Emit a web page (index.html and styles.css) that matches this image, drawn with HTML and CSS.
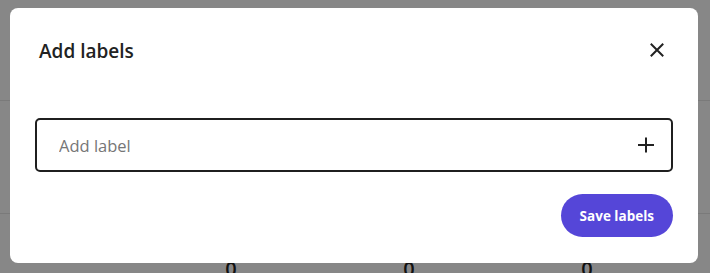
FILE: index.html
```html
<!DOCTYPE html>
<html lang="en">
  <head>
    <meta charset="utf-8">
    <meta name="viewport" content="width=device-width, initial-scale=1">
    <title>Add labels</title>
    <link rel="stylesheet" href="styles.css">
  </head>
  <body>
    <div class="page">
      <div class="page-top"></div>
      <div class="page-row"></div>
      <div class="stats">
        <span class="stat">0</span>
        <span class="stat">0</span>
        <span class="stat">0</span>
      </div>
    </div>

    <div class="backdrop">
      <div class="modal" role="dialog" aria-labelledby="modal-title">
        <div class="modal-header">
          <h2 class="modal-title" id="modal-title">Add labels</h2>
          <button class="icon-btn close-btn" aria-label="Close">
            <svg width="24" height="24" viewBox="0 0 24 24" fill="none" stroke="#222" stroke-width="2" stroke-linecap="square">
              <path d="M6.5 6.5l11 11M17.5 6.5l-11 11"/>
            </svg>
          </button>
        </div>
        <div class="label-field">
          <input class="label-input" type="text" placeholder="Add label" autofocus>
          <button class="icon-btn add-btn" aria-label="Add label">
            <svg width="24" height="24" viewBox="0 0 24 24" fill="none" stroke="#222" stroke-width="2">
              <path d="M12 4.5v15M4 12h16"/>
            </svg>
          </button>
        </div>
        <div class="modal-footer">
          <button class="save-btn">Save labels</button>
        </div>
      </div>
    </div>
  </body>
</html>
```

FILE: styles.css
```css
html, body {
  margin: 0;
  height: 100%;
}

* {
  box-sizing: border-box;
}

body {
  font-family: "Open Sans", "Noto Sans", sans-serif;
  background: #fff;
  overflow: hidden;
}

/* page under the dialog */
.page-top {
  height: 101px;
  border-bottom: 1px solid #e6e6e6;
}

.page-row {
  height: 113px;
  border-bottom: 1px solid #e6e6e6;
}

.stats {
  display: flex;
  padding: 41px 0 0 142px;
}

.stat {
  width: 178px;
  text-align: center;
  font-size: 20px;
  font-weight: 600;
  line-height: 28px;
  color: #222;
}

/* dialog */
.backdrop {
  position: fixed;
  inset: 0;
  background: rgba(0, 0, 0, 0.47);
}

.modal {
  position: absolute;
  top: 8px;
  left: 10px;
  width: 688px;
  height: 255px;
  padding: 28px 25px 25px;
  background: #fff;
  border-radius: 8px;
}

.modal-header {
  display: flex;
  align-items: center;
  justify-content: space-between;
  height: 30px;
}

.modal-title {
  margin: 0;
  padding-left: 4px;
  font-size: 19px;
  font-weight: 600;
  line-height: 24px;
  color: #222;
}

.icon-btn {
  display: flex;
  align-items: center;
  justify-content: center;
  padding: 0;
  border: 0;
  background: none;
  cursor: pointer;
}

.close-btn {
  width: 30px;
  height: 30px;
  margin: 0 1px 3px 0;
}

.label-field {
  display: flex;
  align-items: center;
  height: 54px;
  margin-top: 52px;
  padding: 0 13px 0 22px;
  border: 2px solid #1f1f1f;
  border-radius: 5px;
}

.label-input {
  flex: 1;
  min-width: 0;
  height: 100%;
  padding: 0;
  border: 0;
  outline: none;
  font-family: inherit;
  font-size: 16.5px;
  color: #222;
  caret-color: #222;
}

.label-input::placeholder {
  color: #767676;
}

.add-btn {
  width: 24px;
  height: 24px;
}

.modal-footer {
  display: flex;
  justify-content: flex-end;
  margin-top: 22px;
}

.save-btn {
  height: 43px;
  padding: 0 19px;
  border: 0;
  border-radius: 22px;
  background: #5546d8;
  color: #fff;
  font-family: inherit;
  font-size: 13.5px;
  font-weight: 700;
  cursor: pointer;
}
```
